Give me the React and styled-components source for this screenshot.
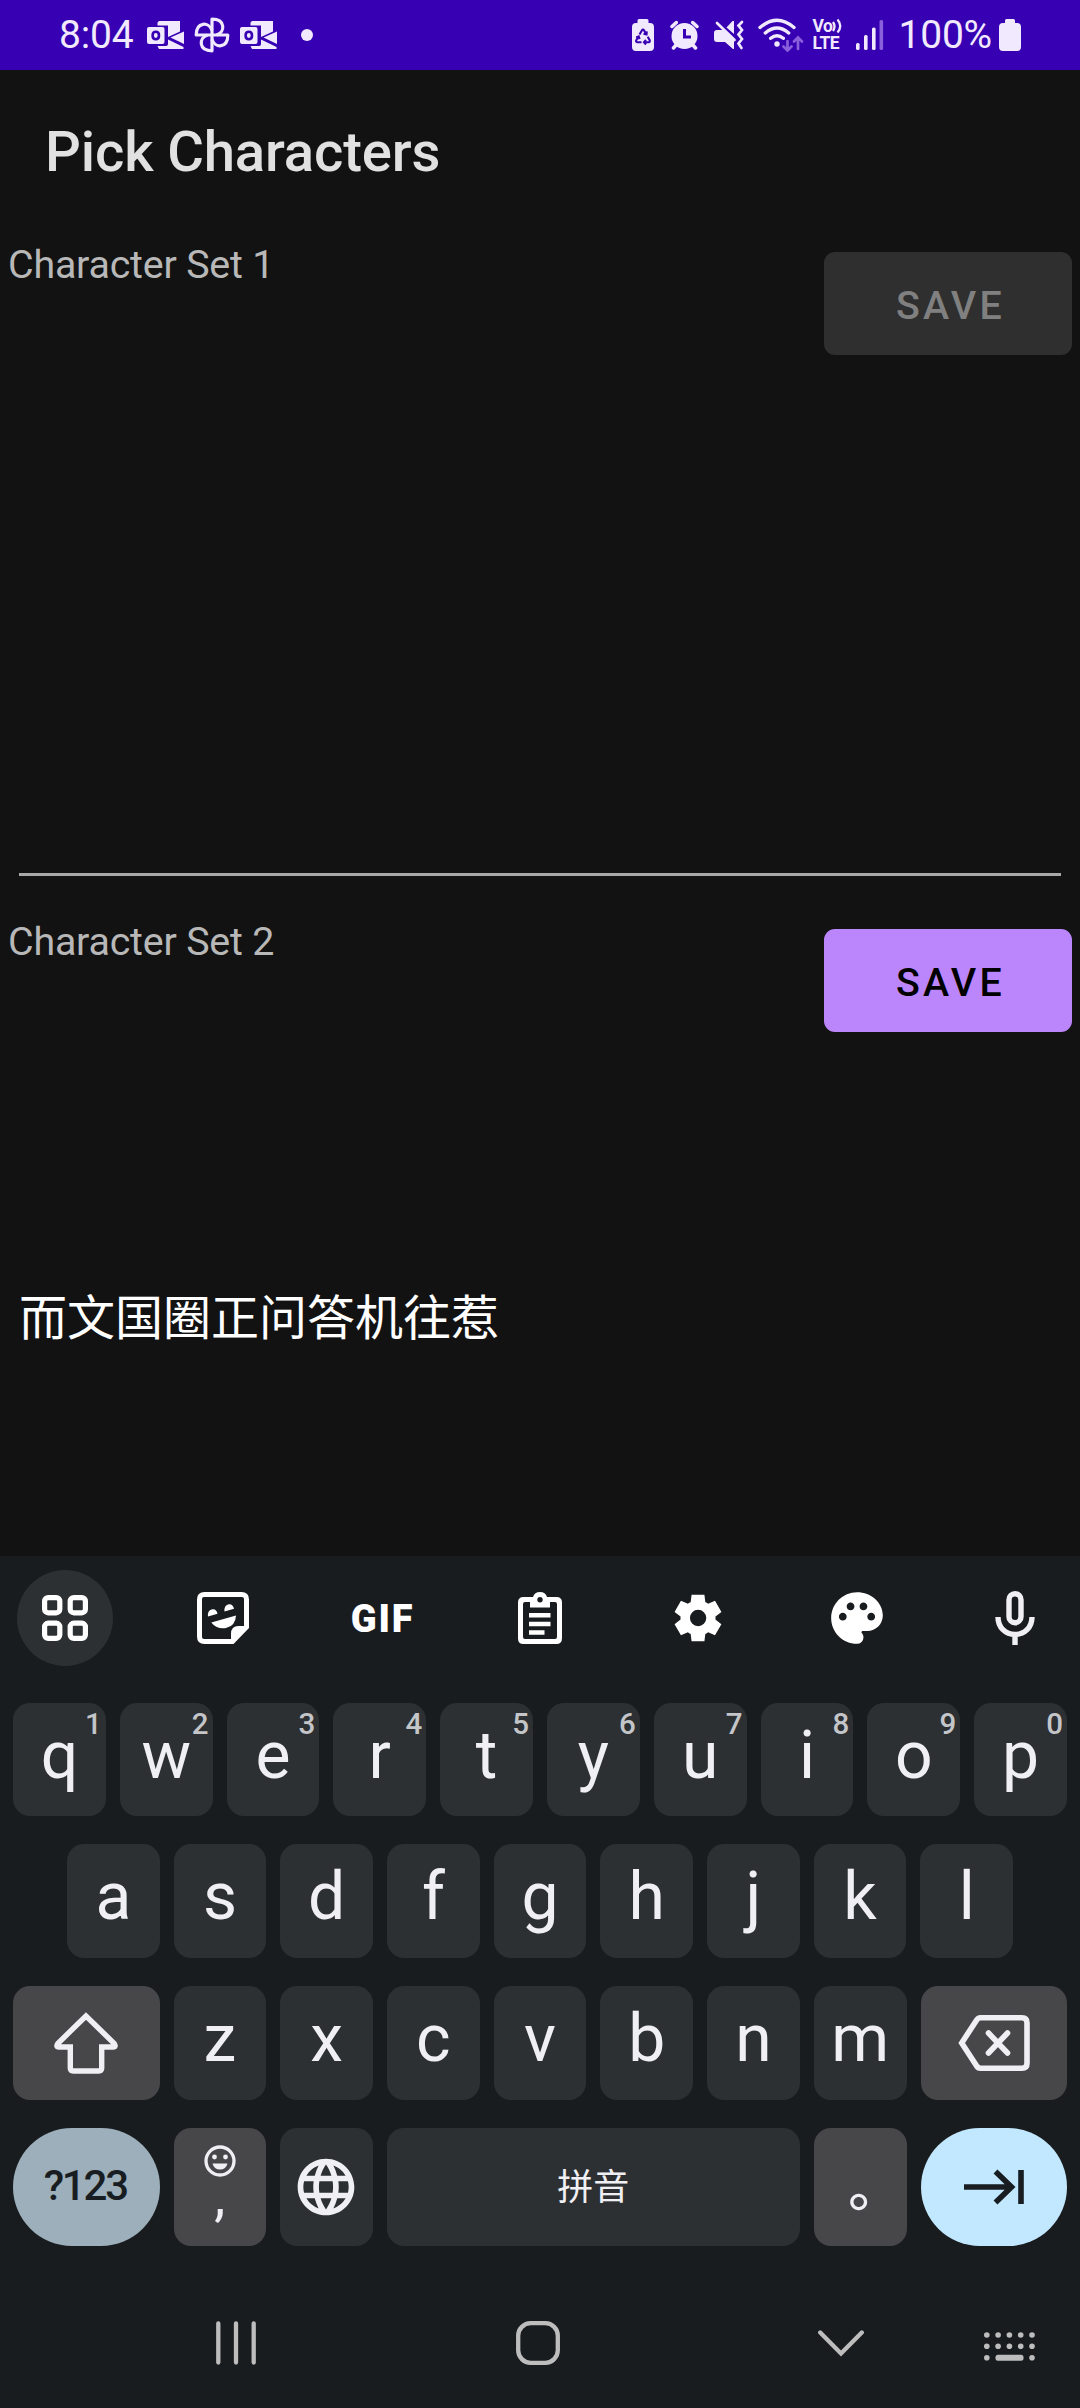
import { useState } from "react";
import styled, { createGlobalStyle, css } from "styled-components";
import { MdLanguage, MdPalette } from "react-icons/md";

const colors = {
  status: "#3700b3",
  statusIcon: "#f1e9fd",
  statusDim: "#8a5fdc",
  screen: "#121212",
  primary: "#bb86fc",
  disabled: "#2f2f2f",
  keyboard: "#191c1e",
  key: "#2d3033",
  keyAlt: "#474749",
  keyText: "#f0f0f4",
  hint: "#c3c5c8",
  symbols: "#9cafbb",
  enter: "#c2e8ff",
  nav: "#bdbdbe",
};

const digitRow = [
  ["q", "1"],
  ["w", "2"],
  ["e", "3"],
  ["r", "4"],
  ["t", "5"],
  ["y", "6"],
  ["u", "7"],
  ["i", "8"],
  ["o", "9"],
  ["p", "0"],
];
const middleRow = ["a", "s", "d", "f", "g", "h", "j", "k", "l"];
const bottomRow = ["z", "x", "c", "v", "b", "n", "m"];

export default function App() {
  const [secondSet, setSecondSet] = useState("而文国圈正问答机往惹");

  return (
    <Screen>
      <GlobalStyle />
      <StatusBar />
      <TitleBar>
        <Title>Pick Characters</Title>
      </TitleBar>
      <Content>
        <CharacterSet>
          <SetHeader>
            <Label>Character Set 1</Label>
            <SaveButton disabled>SAVE</SaveButton>
          </SetHeader>
          <Field underlined />
        </CharacterSet>
        <CharacterSet>
          <SetHeader>
            <Label>Character Set 2</Label>
            <SaveButton>SAVE</SaveButton>
          </SetHeader>
          <Field>
            <FieldInput
              value={secondSet}
              onChange={(e) => setSecondSet(e.target.value)}
            />
          </Field>
        </CharacterSet>
      </Content>
      <Keyboard />
    </Screen>
  );
}

function StatusBar() {
  return (
    <StatusWrapper>
      <StatusText>8:04</StatusText>
      <Spaced left={14}>
        <OutlookIcon />
      </Spaced>
      <Spaced left={10}>
        <PinwheelIcon />
      </Spaced>
      <Spaced left={10}>
        <OutlookIcon />
      </Spaced>
      <Dot />
      <StatusRight>
        <RecycleBatteryIcon />
        <Spaced left={16}>
          <AlarmIcon />
        </Spaced>
        <Spaced left={15}>
          <MuteIcon />
        </Spaced>
        <Spaced left={14}>
          <WifiIcon />
        </Spaced>
        <VoLte>
          <VoRow>
            Vo
            <VoWavesIcon />
          </VoRow>
          <span>LTE</span>
        </VoLte>
        <Spaced left={13}>
          <SignalIcon />
        </Spaced>
        <Spaced left={14}>
          <StatusText>100%</StatusText>
        </Spaced>
        <Spaced left={7}>
          <BatteryIcon />
        </Spaced>
      </StatusRight>
    </StatusWrapper>
  );
}

function Keyboard() {
  return (
    <KeyboardWrapper>
      <Toolbar>
        <Tool active>
          <GridIcon />
        </Tool>
        <Tool>
          <StickerIcon />
        </Tool>
        <Tool>
          <GifLabel>GIF</GifLabel>
        </Tool>
        <Tool>
          <ClipboardIcon />
        </Tool>
        <Tool>
          <GearIcon />
        </Tool>
        <Tool>
          <MdPalette size={62} />
        </Tool>
        <Tool>
          <MicIcon />
        </Tool>
      </Toolbar>
      <Keys>
        <KeyRow height={113}>
          {digitRow.map(([letter, digit]) => (
            <Key key={letter}>
              {letter}
              <Hint>{digit}</Hint>
            </Key>
          ))}
        </KeyRow>
        <KeyRow inset={54}>
          {middleRow.map((letter) => (
            <Key key={letter}>{letter}</Key>
          ))}
        </KeyRow>
        <KeyRow>
          <IconKey wide alt>
            <ShiftIcon />
          </IconKey>
          {bottomRow.map((letter) => (
            <Key key={letter}>{letter}</Key>
          ))}
          <IconKey wide alt>
            <BackspaceIcon />
          </IconKey>
        </KeyRow>
        <KeyRow height={118}>
          <PillKey tint={colors.symbols}>
            <SymbolsLabel>?123</SymbolsLabel>
          </PillKey>
          <CommaKey alt>
            <SmileIcon />
            <Comma>,</Comma>
          </CommaKey>
          <IconKey>
            <MdLanguage size={68} />
          </IconKey>
          <SpaceKey>拼音</SpaceKey>
          <StopKey alt>。</StopKey>
          <PillKey tint={colors.enter}>
            <TabIcon />
          </PillKey>
        </KeyRow>
      </Keys>
      <NavBar>
        <RecentsIcon />
        <HomeIcon />
        <ChevronIcon />
        <KeyboardIcon />
      </NavBar>
    </KeyboardWrapper>
  );
}

/* status bar icons */

function OutlookIcon() {
  return (
    <svg width="37" height="30" viewBox="0 0 37 30">
      <g fill={colors.statusIcon}>
        <path d="M12 1h21v10.5L21 17V5.5H10.500V2.500z" />
        <path d="M23.5 17.5 37 11.5V24z" />
        <path d="M21 19.5 36.5 27v2H12l-1.500-3H19q2 0 2-2z" />
        <path
          fillRule="evenodd"
          d="M2 7h13.500q2 0 2 2v13q0 2-2 2H2q-2 0-2-2V9q0-2 2-2zm6.800 3.500q-4.500 0-4.500 5t4.500 5 4.500-5-4.500-5zm0 2.600q1.900 0 1.900 2.400t-1.900 2.400-1.900-2.400 1.900-2.400z"
        />
      </g>
    </svg>
  );
}

function PinwheelIcon() {
  return (
    <svg width="36" height="36" viewBox="-18 -18 36 36" fill="none">
      <g stroke={colors.statusIcon} strokeWidth="3.2" strokeLinejoin="round">
        {[0, 90, 180, 270].map((angle) => (
          <path
            key={angle}
            d="M0 0V-15.800C13.500-15.800 13.500-3 4.500 0"
            transform={`rotate(${angle})`}
          />
        ))}
      </g>
    </svg>
  );
}

function RecycleBatteryIcon() {
  return (
    <svg width="22" height="32" viewBox="0 0 22 32">
      <path
        d="M7 0h8q1.500 0 1.500 1.500V4H18q4 0 4 4v20q0 4-4 4H4q-4 0-4-4V8q0-4 4-4h1.500V1.500Q5.500 0 7 0z"
        fill={colors.statusIcon}
      />
      <g fill="none" stroke={colors.status} strokeWidth="2.1">
        <path d="M7.500 15.500 10 11.300q1-1.600 2 0l2.300 4M15.700 17.800l2 3.500q.6 1.700-1.200 2h-4.200M9.500 23.300H5.300q-1.800-.3-1-2L6.500 17.800" />
        <path d="m14.800 12.300-.3 3.200-3-.8M14 21l-2 2.300 2 2.200M4.200 18.500l2.500-1 .9 2.700" />
      </g>
    </svg>
  );
}

function AlarmIcon() {
  return (
    <svg width="29" height="30" viewBox="0 0 29 30" fill="none">
      <circle cx="14.5" cy="16" r="13" fill={colors.statusIcon} />
      <g stroke={colors.statusIcon} strokeWidth="3.5" strokeLinecap="round">
        <path d="m2 6.500 4.300-4M27 6.500l-4.300-4M3.500 28l3-3.500M25.500 28l-3-3.500" />
      </g>
      <path d="M14.500 9v8h6.500" stroke={colors.status} strokeWidth="3" />
    </svg>
  );
}

function MuteIcon() {
  return (
    <svg width="30" height="30" viewBox="0 0 30 30" fill="none">
      <path
        d="M3 10h6l11 9.500V29h-1l-8-7H3q-3 0-3-3v-6q0-3 3-3z"
        fill={colors.statusIcon}
      />
      <path d="M12.500 7.500 18.500 1H20v13z" fill={colors.statusIcon} />
      <g stroke={colors.statusIcon} strokeWidth="2.7" strokeLinecap="round">
        <path d="M3 3 20.500 20" />
        <path d="m28 2-3.500 3.500L28 10l-3.500 4.500L28 19l-3.500 4.500L27.500 28" />
      </g>
    </svg>
  );
}

function WifiIcon() {
  return (
    <svg width="46" height="34" viewBox="0 0 46 34" fill="none">
      <g stroke={colors.statusIcon} strokeWidth="3.4" strokeLinecap="round">
        <path d="M2 9.500q17-14.500 34 0M7.300 15q11.700-10 23.400 0M12.700 20.300q6.300-5.200 12.600 0" />
      </g>
      <circle cx="19" cy="26" r="2.7" fill={colors.statusIcon} />
      <g stroke={colors.statusDim} strokeWidth="2.7" strokeLinecap="round">
        <path d="M29.500 23v9M25.500 28.500l4 4 4-4M40 31V20M36 23.500l4-4 4 4" />
      </g>
    </svg>
  );
}

function VoWavesIcon() {
  return (
    <svg width="11" height="16" viewBox="0 0 11 16" fill="none">
      <path
        d="M1 4q3 4.500 0 9M5.500 1.500q5.500 6.500 0 13"
        stroke={colors.statusIcon}
        strokeWidth="2.3"
      />
    </svg>
  );
}

function SignalIcon() {
  return (
    <svg width="28" height="30" viewBox="0 0 28 30" fill={colors.statusIcon}>
      <rect x="0" y="23" width="3.6" height="7" rx="1.5" />
      <rect x="8" y="15" width="3.6" height="15" rx="1.5" />
      <rect x="16" y="7.5" width="3.6" height="22.5" rx="1.5" />
      <rect
        x="23.5"
        y="0"
        width="3.6"
        height="30"
        rx="1.5"
        fill={colors.statusDim}
      />
    </svg>
  );
}

function BatteryIcon() {
  return (
    <svg width="22" height="32" viewBox="0 0 22 32" fill={colors.statusIcon}>
      <path d="M7.500 0h7q1.500 0 1.500 1.500V4h2q4 0 4 4v20q0 4-4 4H4q-4 0-4-4V8q0-4 4-4h2V1.500Q6 0 7.500 0z" />
    </svg>
  );
}

/* keyboard icons */

function GridIcon() {
  return (
    <svg width="48" height="48" viewBox="0 0 48 48" fill="none">
      <g stroke="#fff" strokeWidth="5.2">
        <rect x="3.6" y="3.6" width="15.2" height="15.2" rx="3.6" />
        <rect x="29.2" y="3.6" width="15.2" height="15.2" rx="3.6" />
        <rect x="3.6" y="29.2" width="15.2" height="15.2" rx="3.6" />
        <rect x="29.2" y="29.2" width="15.2" height="15.2" rx="3.6" />
      </g>
    </svg>
  );
}

function StickerIcon() {
  return (
    <svg width="52" height="52" viewBox="0 0 52 52">
      <path
        fill="#fff"
        fillRule="evenodd"
        d="M7.500 0h37q7.500 0 7.500 7.500V36L36.500 52h-29Q0 52 0 44.500v-37Q0 0 7.500 0zM7 5Q5 5 5 7v38q0 2 2 2h27v-5q0-8 7.500-8H47V7q0-2-2-2z"
      />
      <g fill="#fff">
        <path d="M11 24.500q-.8-6.500 4.500-7.300 4-.4 5 4.500zM27.500 19.500q-.7-6.500 4.500-7.300 3.800-.4 5 4.500z" />
        <path d="M14.300 30.500 39 23.500q-.5 10.500-10 12.500-9.500 1.500-14.700-5.500z" />
      </g>
    </svg>
  );
}

function ClipboardIcon() {
  return (
    <svg width="44" height="52" viewBox="0 0 44 52">
      <path
        fill="#fff"
        fillRule="evenodd"
        d="M5.500 5H15q1.500-5 7-5t7 5h9.500Q44 5 44 10.500V46q0 6-5.500 6h-33Q0 52 0 46.500v-36Q0 5 5.500 5zM5 12v33q0 2 2 2h30q2 0 2-2V12q0-2-2-2h-5v5.500H12V10H7q-2 0-2 2zm17-7a2.700 2.700 0 1 0 0 5.400A2.700 2.700 0 0 0 22 5z"
      />
      <path
        d="M11 23.300h21.500M11 32h21.500M11 40.500h15.500"
        stroke="#fff"
        strokeWidth="4.6"
      />
    </svg>
  );
}

function GearIcon() {
  return (
    <svg width="56" height="56" viewBox="0 -960 960 960" fill="#fff">
      <path d="m370-80-16-128q-13-5-24.500-12T307-235l-119 50L78-375l103-78q-1-7-1-13.500v-27q0-6.500 1-13.500L78-585l110-190 119 50q11-8 23-15t24-12l16-128h220l16 128q13 5 24.500 12t22.500 15l119-50 110 190-103 78q1 7 1 13.500v27q0 6.500-2 13.500l103 78-110 190-118-50q-11 8-23 15t-24 12L590-80H370Zm112-260q58 0 99-41t41-99q0-58-41-99t-99-41q-59 0-99.500 41T342-480q0 58 40.500 99t99.500 41Z" />
    </svg>
  );
}

function MicIcon() {
  return (
    <svg width="40" height="56" viewBox="0 0 40 56" fill="none">
      <g stroke={colors.keyText} strokeWidth="5.4">
        <rect x="14" y="3.7" width="12" height="29" rx="6" />
        <path d="M3 27c0 10.500 7.500 17.500 17 17.500S37 37.500 37 27M20 44.500V55" />
      </g>
    </svg>
  );
}

function ShiftIcon() {
  return (
    <svg width="64" height="62" viewBox="0 0 64 62" fill="none">
      <path
        d="M32 4 3.800 31.500Q1.500 34.800 5 35h11.300v21q0 3 3 3h25.400q3 0 3-3V35H59q3.500-.2 1.200-3.500z"
        stroke={colors.keyText}
        strokeWidth="5.4"
      />
    </svg>
  );
}

function BackspaceIcon() {
  return (
    <svg width="72" height="58" viewBox="0 0 72 58" fill="none">
      <g stroke={colors.keyText} strokeWidth="5.6">
        <path d="M22.500 3.700H64q5 0 5 5v40.600q0 5-5 5H22.500q-2.500 0-4-2.500L3.700 29 18.500 6.200q1.500-2.500 4-2.500z" />
        <path d="m30.500 19 19 20M49.500 19l-19 20" strokeLinecap="round" />
      </g>
    </svg>
  );
}

function SmileIcon() {
  return (
    <svg width="32" height="32" viewBox="0 0 32 32">
      <circle
        cx="16"
        cy="16"
        r="14"
        fill="none"
        stroke={colors.keyText}
        strokeWidth="3.3"
      />
      <g fill={colors.keyText}>
        <circle cx="10.5" cy="12" r="2.4" />
        <circle cx="21.5" cy="12" r="2.4" />
        <path d="M8.500 18.500h15q-1.500 6-7.500 6t-7.500-6z" />
      </g>
    </svg>
  );
}

function TabIcon() {
  return (
    <svg width="60" height="36" viewBox="0 0 60 36" fill="none">
      <path
        d="M0 18h48M31.500 2.500 47.500 18 31.500 33.500M57 1v34"
        stroke="#181d22"
        strokeWidth="5.6"
      />
    </svg>
  );
}

function RecentsIcon() {
  return (
    <svg width="40" height="44" viewBox="0 0 40 44">
      <path
        d="M2.300 2.500v39M20 2.500v39M37.700 2.500v39"
        stroke={colors.nav}
        strokeWidth="4.3"
        strokeLinecap="round"
      />
    </svg>
  );
}

function HomeIcon() {
  return (
    <svg width="44" height="44" viewBox="0 0 44 44" fill="none">
      <rect
        x="2.2"
        y="2.2"
        width="39.6"
        height="39.6"
        rx="12.5"
        stroke={colors.nav}
        strokeWidth="4.3"
      />
    </svg>
  );
}

function ChevronIcon() {
  return (
    <svg width="46" height="27" viewBox="0 0 46 27" fill="none">
      <path
        d="M2.200 2.500 23 23.500 43.800 2.500"
        stroke={colors.nav}
        strokeWidth="4.3"
        strokeLinecap="round"
      />
    </svg>
  );
}

function KeyboardIcon() {
  const xs = [2.8, 14.1, 25.4, 36.7, 48];
  return (
    <svg width="51" height="29" viewBox="0 0 51 29" fill={colors.nav}>
      {xs.map((x) => (
        <g key={x}>
          <circle cx={x} cy="3" r="2.8" />
          <circle cx={x} cy="14.3" r="2.8" />
        </g>
      ))}
      <circle cx="2.8" cy="25.7" r="2.8" />
      <circle cx="48" cy="25.7" r="2.8" />
      <rect x="11.5" y="22.7" width="28" height="6" rx="2.5" />
    </svg>
  );
}

const GlobalStyle = createGlobalStyle`
  * {
    box-sizing: border-box;
  }

  body {
    margin: 0;
    background: ${colors.keyboard};
    font-family: Roboto, "Noto Sans CJK SC", sans-serif;
  }

  svg {
    display: block;
    flex-shrink: 0;
  }

  button,
  input {
    border: none;
    padding: 0;
    margin: 0;
    font-family: inherit;
  }
`;

// keeps styling-only props off the DOM nodes
const own = (...names) => ({
  shouldForwardProp: (prop) => !names.includes(prop),
});

const Screen = styled.main`
  width: 1080px;
  height: 2408px;
  display: flex;
  flex-direction: column;
  overflow: hidden;
  background: ${colors.screen};
`;

const StatusWrapper = styled.header`
  height: 70px;
  flex-shrink: 0;
  display: flex;
  align-items: center;
  padding: 0 59px;
  background: ${colors.status};
  color: ${colors.statusIcon};
`;

const StatusRight = styled.div`
  margin-left: auto;
  display: flex;
  align-items: center;
`;

const StatusText = styled.span`
  display: block;
  font-size: 39px;
  line-height: 46px;
  letter-spacing: -0.2px;
`;

const Spaced = styled.div.withConfig(own("left"))`
  margin-left: ${(props) => props.left}px;
`;

const Dot = styled.span`
  width: 12px;
  height: 12px;
  margin-left: 24px;
  border-radius: 50%;
  background: ${colors.statusIcon};
`;

const VoLte = styled.div`
  width: 31px;
  margin-left: 8px;
  display: flex;
  flex-direction: column;
  font-size: 17.5px;
  font-weight: 700;
  line-height: 17px;
  letter-spacing: -0.6px;
`;

const VoRow = styled.div`
  display: flex;
  height: 17px;
  white-space: nowrap;
`;

const TitleBar = styled.div`
  height: 158px;
  flex-shrink: 0;
  display: flex;
  align-items: center;
  padding: 5px 45px 0;
`;

const Title = styled.h1`
  margin: 0;
  font-size: 56.25px;
  font-weight: 500;
  line-height: 66px;
  letter-spacing: -0.15px;
  color: #e1e1e1;
`;

const Content = styled.section`
  height: 1328px;
  flex-shrink: 0;
  display: flex;
  flex-direction: column;
  overflow: hidden;
`;

const CharacterSet = styled.div`
  height: 677px;
  flex-shrink: 0;
  display: flex;
  flex-direction: column;
`;

const SetHeader = styled.div`
  display: flex;
  justify-content: space-between;
  align-items: flex-start;
  padding: 0 8px;
`;

const Label = styled.label`
  margin-top: 13px;
  font-size: 39.375px;
  line-height: 47px;
  letter-spacing: -0.2px;
  color: #b8b8b8;
`;

const SaveButton = styled.button`
  width: 248px;
  height: 103px;
  margin-top: 24px;
  padding: 3px 0 0 5px;
  border-radius: 11px;
  font-size: 39.375px;
  font-weight: 500;
  letter-spacing: 3.3px;
  background: ${colors.primary};
  color: #000;

  &:disabled {
    background: ${colors.disabled};
    color: #808080;
  }
`;

const Field = styled.div.withConfig(own("underlined"))`
  display: flex;
  align-items: center;
  margin: 0 19px;
  ${(props) =>
    props.underlined
      ? css`
          flex: 1;
          margin-bottom: 29px;
          border-bottom: 3px solid #a8a8a8;
        `
      : css`
          height: 564px;
          flex-shrink: 0;
        `}
`;

const FieldInput = styled.input`
  width: 100%;
  height: 80px;
  background: transparent;
  color: #fff;
  font-size: 48px;
  outline: none;
`;

const KeyboardWrapper = styled.section`
  flex: 1;
  display: flex;
  flex-direction: column;
  background: ${colors.keyboard};
`;

const Toolbar = styled.div`
  height: 147px;
  display: flex;
  justify-content: space-between;
  align-items: flex-start;
  padding: 14px 17px 0;
`;

const Tool = styled.button.withConfig(own("active"))`
  width: 96px;
  height: 96px;
  display: flex;
  justify-content: center;
  align-items: center;
  border-radius: 50%;
  background: ${(props) => (props.active ? colors.key : "transparent")};
  color: #fff;
`;

const GifLabel = styled.span`
  font-size: 38px;
  font-weight: 900;
  letter-spacing: 1.8px;
  padding: 2px 0 0 2px;
`;

const Keys = styled.div`
  display: flex;
  flex-direction: column;
  gap: 28px;
  padding: 0 13px;
`;

const KeyRow = styled.div.withConfig(own("inset", "height"))`
  height: ${(props) => props.height || 114}px;
  display: flex;
  gap: 14px;
  padding: 0 ${(props) => props.inset || 0}px;
`;

const Key = styled.button.withConfig(own("alt", "wide"))`
  position: relative;
  flex: 1 1 0;
  min-width: 0;
  display: flex;
  justify-content: center;
  align-items: center;
  padding-bottom: 8px;
  border-radius: 17px;
  background: ${(props) => (props.alt ? colors.keyAlt : colors.key)};
  color: ${colors.keyText};
  font-size: 66px;
  line-height: 1;
`;

const Hint = styled.span`
  position: absolute;
  top: 7px;
  right: 4px;
  font-size: 29.5px;
  font-weight: 500;
  color: ${colors.hint};
`;

const IconKey = styled(Key)`
  padding: 0;
  flex: ${(props) => (props.wide ? "0 0 146.5px" : "0 0 92.5px")};
`;

const PillKey = styled.button.withConfig(own("tint"))`
  flex: 0 0 146.5px;
  display: flex;
  justify-content: center;
  align-items: center;
  border-radius: 59px;
  background: ${(props) => props.tint};
  color: #181d22;
`;

const SymbolsLabel = styled.span`
  font-size: 42px;
  font-weight: 500;
  line-height: 1;
  letter-spacing: -2.2px;
  margin: 0 2px 3px 0;
`;

const CommaKey = styled(Key)`
  flex: 0 0 92.5px;
  flex-direction: column;
  justify-content: flex-start;
  padding: 17px 0 0;
`;

const Comma = styled.span`
  font-size: 56px;
  line-height: 50px;
  margin-top: -6px;
`;

const SpaceKey = styled(Key)`
  padding: 2px 0 0;
  font-size: 36px;
`;

const StopKey = styled(Key)`
  flex: 0 0 92.5px;
  padding: 3px 0 0 30px;
  font-size: 54px;
  font-weight: 500;
`;

const NavBar = styled.nav`
  flex: 1;
  display: flex;
  align-items: center;
  padding: 32px 0 0 216px;

  & > :nth-child(2) {
    margin-left: 260px;
  }

  & > :nth-child(3) {
    margin-left: 258px;
  }

  & > :nth-child(4) {
    margin-left: 120px;
    margin-top: 7px;
  }
`;
